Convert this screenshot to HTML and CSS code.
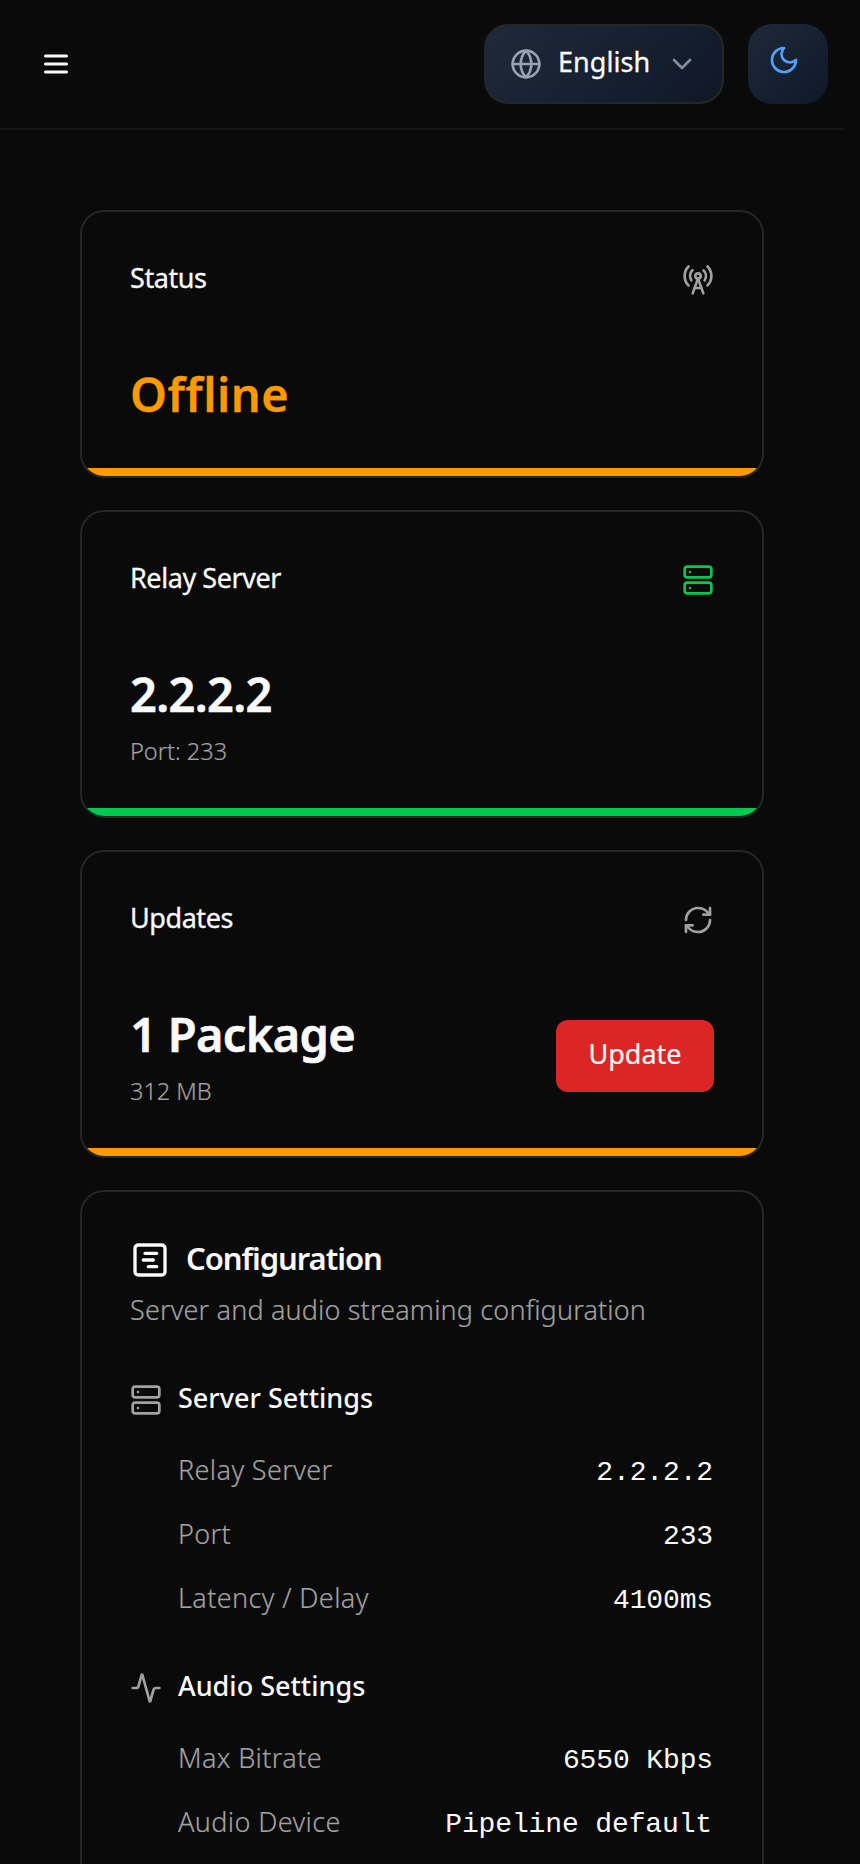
FILE: index.html
```html
<!DOCTYPE html>
<html lang="en">
<head>
<meta charset="utf-8">
<title>Dashboard</title>
<link rel="stylesheet" href="styles.css">
</head>
<body>
<div class="page">
  <header class="topbar">
    <button class="menu-btn" aria-label="Menu">
      <svg class="icon bars" viewBox="0 0 32 32"><path d="M5.5 8h21M5.5 16h21M5.5 24h21"/></svg>
    </button>
    <div class="actions">
      <button class="lang">
        <svg class="icon globe" viewBox="0 0 24 24"><circle cx="12" cy="12" r="10"/><path d="M12 2a14.5 14.5 0 0 0 0 20 14.5 14.5 0 0 0 0-20"/><path d="M2 12h20"/></svg>
        <span class="text lang-name">English</span>
        <svg class="icon chevron" viewBox="0 0 24 24"><path d="m6 9 6 6 6-6"/></svg>
      </button>
      <button class="theme" aria-label="Theme">
        <svg class="icon" viewBox="0 0 24 24"><path d="M12 3a6 6 0 0 0 9 9 9 9 0 1 1-9-9Z"/></svg>
      </button>
    </div>
  </header>
  <main class="content">
    <section class="card status">
      <div class="card-head"><h2 class="text card-title">Status</h2>
        <svg class="icon muted" viewBox="0 0 24 24"><path d="M4.9 16.1C1 12.2 1 5.8 4.9 1.9"/><path d="M7.8 4.7a6.14 6.14 0 0 0-.8 7.5"/><circle cx="12" cy="9" r="2"/><path d="M16.2 4.8c2 2 2.26 5.11.8 7.47"/><path d="M19.1 1.9a9.96 9.96 0 0 1 0 14.1"/><path d="M9.5 18h5"/><path d="m8 22 4-11 4 11"/></svg>
      </div>
      <p class="text value warn">Offline</p>
      <div class="bar bar-warn"></div>
    </section>
    <section class="card">
      <div class="card-head"><h2 class="text card-title">Relay Server</h2>
        <svg class="icon ok" viewBox="0 0 24 24"><rect width="20" height="8" x="2" y="2" rx="2"/><rect width="20" height="8" x="2" y="14" rx="2"/><path d="M6 6h.01M6 18h.01"/></svg>
      </div>
      <p class="text value">2.2.2.2</p>
      <p class="text note">Port: 233</p>
      <div class="bar bar-ok"></div>
    </section>
    <section class="card">
      <div class="card-head"><h2 class="text card-title">Updates</h2>
        <svg class="icon muted" viewBox="0 0 24 24"><path d="M3 12a9 9 0 0 1 9-9 9.75 9.75 0 0 1 6.74 2.74L21 8"/><path d="M21 3v5h-5"/><path d="M21 12a9 9 0 0 1-9 9 9.75 9.75 0 0 1-6.74-2.74L3 16"/><path d="M8 16H3v5"/></svg>
      </div>
      <div class="update-row">
        <div><p class="text value">1 Package</p><p class="text note">312 MB</p></div>
        <button class="update"><span class="text">Update</span></button>
      </div>
      <div class="bar bar-warn"></div>
    </section>
    <section class="card config">
      <div class="config-head">
        <svg class="icon large" viewBox="0 0 24 24"><rect width="18" height="18" x="3" y="3" rx="2"/><path d="M9 8h7M8 12h6M11 16h5"/></svg>
        <h2 class="text config-title">Configuration</h2>
      </div>
      <p class="text config-desc">Server and audio streaming configuration</p>
      <div class="group">
        <div class="group-head"><svg class="icon muted" viewBox="0 0 24 24"><rect width="20" height="8" x="2" y="2" rx="2"/><rect width="20" height="8" x="2" y="14" rx="2"/><path d="M6 6h.01M6 18h.01"/></svg><h3 class="text">Server Settings</h3></div>
        <dl class="rows">
          <div class="row"><dt class="text">Relay Server</dt><dd>2.2.2.2</dd></div>
          <div class="row"><dt class="text">Port</dt><dd>233</dd></div>
          <div class="row"><dt class="text">Latency / Delay</dt><dd>4100ms</dd></div>
        </dl>
      </div>
      <div class="group">
        <div class="group-head"><svg class="icon muted" viewBox="0 0 24 24"><path d="M22 12h-2.48a2 2 0 0 0-1.93 1.46l-2.35 8.36a.25.25 0 0 1-.48 0L9.24 2.18a.25.25 0 0 0-.48 0l-2.35 8.36A2 2 0 0 1 4.49 12H2"/></svg><h3 class="text">Audio Settings</h3></div>
        <dl class="rows">
          <div class="row"><dt class="text">Max Bitrate</dt><dd>6550 Kbps</dd></div>
          <div class="row"><dt class="text">Audio Device</dt><dd class="long">Pipeline default</dd></div>
        </dl>
      </div>
    </section>
  </main>
</div>
</body>
</html>
```
FILE: styles.css
```css
* { box-sizing: border-box; margin: 0; padding: 0; }
body { background: #0a0a0a; color: #fafafa; font-family: "Noto Sans", "Open Sans", sans-serif; font-size: 27px; height: 1864px; overflow: hidden; }
button { background: none; border: 0; color: inherit; font: inherit; }
.page { width: 844px; height: 1864px; overflow: hidden; }
.icon { width: 32px; height: 32px; flex: none; display: block; fill: none; stroke: currentColor; stroke-width: 2; stroke-linecap: round; stroke-linejoin: round; }
.bars { stroke-width: 3; }
.text { white-space: nowrap; }

.topbar { height: 130px; border-bottom: 2px solid #161616; padding: 0 16px 0 40px; display: flex; align-items: center; justify-content: space-between; }
.actions { display: flex; gap: 24px; }
.lang { width: 240px; height: 80px; border: 2px solid #262626; border-radius: 24px; background: linear-gradient(135deg, #1e2939, #101828); display: flex; align-items: center; padding: 0 24px; gap: 16px; }
.lang-name { font-weight: 400; line-height: 40px; padding-bottom: 5px; letter-spacing: .05px; -webkit-text-stroke: .3px; }
.chevron { margin-left: auto; margin-right: 2px; opacity: .5; }
.globe { color: #99a1af; }
.theme { width: 80px; height: 80px; border-radius: 24px; background: linear-gradient(135deg, #1e2939, #101828); padding: 20px; color: #51a2ff; display: flex; align-items: flex-start; }

.content { padding: 80px; display: grid; gap: 32px; }
.card { position: relative; border: 2px solid #262626; border-radius: 24px; padding: 48px; height: 308px; overflow: hidden; }
.status { height: 268px; }
.card-head { height: 40px; display: flex; justify-content: space-between; margin-bottom: 62px; }
.card-head .icon { margin-top: 4px; }
.card-title { font-size: 27px; font-weight: 400; line-height: 35px; letter-spacing: -.43px; -webkit-text-stroke: .3px; }
.muted { color: #a1a1a1; }
.ok { color: #00c950; }
.value { font-size: 47px; font-weight: 600; line-height: 64px; letter-spacing: -.66px; -webkit-text-stroke: .6px; }
.warn { color: #fe9a00; letter-spacing: .45px; -webkit-text-stroke: .3px; }
.note { font-size: 23.5px; font-weight: 300; line-height: 32px; margin-top: 9px; color: #a1a1a1; -webkit-text-stroke: .2px; }
.bar { position: absolute; left: 0; right: 0; bottom: 0; height: 8px; }
.bar-warn { background: #fe9a00; }
.bar-ok { background: #00c950; }
.update-row { display: flex; justify-content: space-between; }
.update { width: 158px; height: 72px; margin-top: 18px; border-radius: 12px; background: #dc2626; padding-bottom: 5px; font-weight: 400; -webkit-text-stroke: .2px; }

.config { height: 900px; }
.config-head { display: flex; gap: 16px; height: 40px; align-items: center; }
.large { width: 40px; height: 40px; }
.config-title { font-size: 31px; font-weight: 600; line-height: 35px; padding-bottom: 4px; letter-spacing: -1.05px; }
.config-desc { margin-top: 10px; line-height: 40px; font-weight: 300; color: #a1a1a1; letter-spacing: .15px; -webkit-text-stroke: .2px; }
.group { margin-top: 50px; }
.group + .group { margin-top: 48px; }
.group-head { display: flex; gap: 16px; height: 40px; align-items: center; }
.group-head h3 { font-size: 27px; font-weight: 500; line-height: 35px; padding-bottom: 5px; }
.rows { margin: 32px 0 0 48px; display: grid; gap: 24px; }
.row { display: flex; justify-content: space-between; height: 40px; align-items: center; }
.row dt { color: #a1a1a1; font-weight: 300; line-height: 35px; padding-bottom: 5px; letter-spacing: .38px; -webkit-text-stroke: .2px; }
.row dd { font: 28px/39px "Liberation Mono", monospace; letter-spacing: -.13px; margin-right: 1px; }
.row .long { margin-right: 2px; }
```
